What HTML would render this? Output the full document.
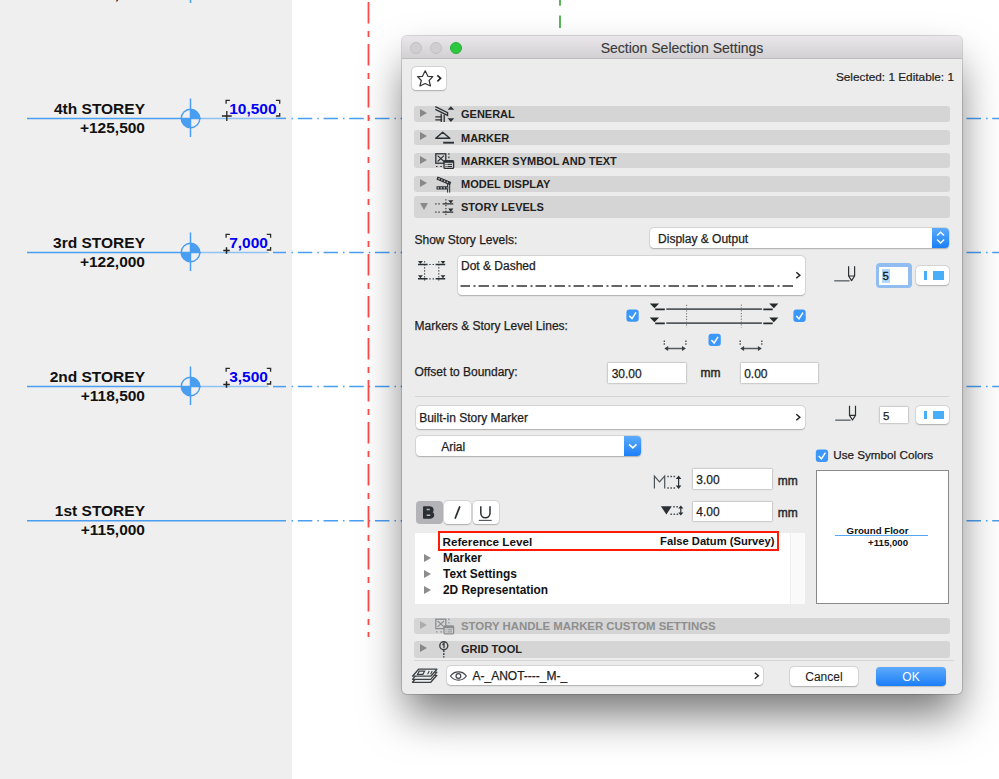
<!DOCTYPE html>
<html><head><meta charset="utf-8">
<style>
*{margin:0;padding:0;box-sizing:border-box}
html,body{width:999px;height:779px;overflow:hidden;background:#fff;font-family:"Liberation Sans",sans-serif;color:#222}
.a{position:absolute}
.t{position:absolute;white-space:nowrap;line-height:1}
#left{left:0;top:0;width:292px;height:779px;background:#efefef}
.lbl{font-weight:bold;font-size:15.5px;color:#111;text-align:right;width:200px}
.val{font-weight:bold;font-size:15.5px;color:#0000f5}
#dlg{left:402px;top:36px;width:560px;height:658px;background:#ececec;border-radius:5px;
 box-shadow:0 0 0 1px rgba(0,0,0,.15),0 24px 44px -4px rgba(0,0,0,.55)}
#title{left:0;top:0;width:560px;height:23px;border-radius:5px 5px 0 0;background:linear-gradient(#e9e7e9,#d2d0d2);border-bottom:1px solid #bdbdbd}
.tl{position:absolute;top:5.5px;width:12px;height:12px;border-radius:50%;background:#d0cfd0;border:0.5px solid #c2c1c2}
.bar{position:absolute;left:12px;width:536px;height:15.5px;background:#d5d5d5;border-radius:3px}
.bt{position:absolute;left:47px;top:3px;font-size:11px;font-weight:bold;color:#222;white-space:nowrap;line-height:1}
.tri{position:absolute;left:6px;top:2.9px;width:0;height:0;border-top:4.7px solid transparent;border-bottom:4.7px solid transparent;border-left:7.8px solid #888}
.f{position:absolute;background:#fff;border:1px solid #cdcdcd;border-radius:1.5px;box-shadow:0 0 0 0.6px #e2e2e2}
.ft{position:absolute;font-size:12px;color:#1d1d1d;white-space:nowrap;line-height:1;-webkit-text-stroke:0.25px}
.pop{position:absolute;background:#fff;border-radius:4px;box-shadow:0 0 0 0.5px rgba(0,0,0,.12),0 0.5px 1.5px rgba(0,0,0,.22)}
.cb{position:absolute;width:12px;height:12px;border-radius:3px;background:#3b99fc}
</style></head><body>
<div id="left" class="a"></div>
<div class="t lbl" style="left:-55px;top:-14.5px">+129,000</div>
<svg class="a" style="left:170px;top:-36px" width="40" height="40"><line x1="20.5" y1="0.5" x2="20.5" y2="39" stroke="#4a9ef2" stroke-width="1.5"/></svg>

<svg class="a" style="left:0;top:0" width="999" height="779">
 <g stroke="#4a9ef2" stroke-width="1.5" fill="none">
  <line x1="27" y1="118.4" x2="201.5" y2="118.4"/><line x1="276" y1="118.4" x2="286" y2="118.4"/><line x1="201.5" y1="118.4" x2="276" y2="118.4" stroke="#8ec2f2"/>
  <line x1="27" y1="252.5" x2="201.5" y2="252.5"/><line x1="273" y1="252.5" x2="286" y2="252.5"/><line x1="201.5" y1="252.5" x2="268.5" y2="252.5" stroke="#8ec2f2"/>
  <line x1="27" y1="386.6" x2="201.5" y2="386.6"/><line x1="273" y1="386.6" x2="286" y2="386.6"/><line x1="201.5" y1="386.6" x2="268.5" y2="386.6" stroke="#8ec2f2"/>
  <line x1="27" y1="520.8" x2="286" y2="520.8"/>
 </g>
 <g stroke="#4a9ef2" stroke-width="1.5" fill="none" stroke-dasharray="14.5 5 1.5 4.72" stroke-dashoffset="-10.8">
  <line x1="287" y1="118.4" x2="999" y2="118.4"/>
  <line x1="287" y1="252.5" x2="999" y2="252.5"/>
  <line x1="287" y1="386.6" x2="999" y2="386.6"/>
  <line x1="287" y1="520.8" x2="999" y2="520.8"/>
 </g>
 <line x1="368.5" y1="0" x2="368.5" y2="637" stroke="#fd4a4a" stroke-width="1.8" stroke-dasharray="21.6 7.4 6 7" stroke-dashoffset="40"/>
 <line x1="560" y1="0" x2="560" y2="28" stroke="#5ab55a" stroke-width="2" stroke-dasharray="5.7 9.9 12.3 100" stroke-dashoffset="0"/>
 <g id="mk">
 </g>
</svg>
<div class="t lbl" style="left:-55px;top:100.5px">4th STOREY</div>
<div class="t lbl" style="left:-55px;top:119.5px">+125,500</div>
<svg class="a" style="left:170px;top:98px" width="40" height="40">
 <line x1="20.5" y1="0.5" x2="20.5" y2="39" stroke="#4a9ef2" stroke-width="1.5"/>
 <circle cx="20.5" cy="20.5" r="9.3" fill="none" stroke="#4a9ef2" stroke-width="1.4"/>
 <path d="M20.5 20.5 L20.5 11.2 A9.3 9.3 0 0 1 29.8 20.5 Z M20.5 20.5 L20.5 29.8 A9.3 9.3 0 0 1 11.2 20.5 Z" fill="#4a9ef2"/>
</svg>
<div class="t val" style="left:229.2px;top:101px">10,500</div>
<div class="t lbl" style="left:-55px;top:234.5px">3rd STOREY</div>
<div class="t lbl" style="left:-55px;top:253.5px">+122,000</div>
<svg class="a" style="left:170px;top:232px" width="40" height="40">
 <line x1="20.5" y1="0.5" x2="20.5" y2="39" stroke="#4a9ef2" stroke-width="1.5"/>
 <circle cx="20.5" cy="20.5" r="9.3" fill="none" stroke="#4a9ef2" stroke-width="1.4"/>
 <path d="M20.5 20.5 L20.5 11.2 A9.3 9.3 0 0 1 29.8 20.5 Z M20.5 20.5 L20.5 29.8 A9.3 9.3 0 0 1 11.2 20.5 Z" fill="#4a9ef2"/>
</svg>
<div class="t val" style="left:229.2px;top:235px">7,000</div>
<div class="t lbl" style="left:-55px;top:368.5px">2nd STOREY</div>
<div class="t lbl" style="left:-55px;top:387.5px">+118,500</div>
<svg class="a" style="left:170px;top:366px" width="40" height="40">
 <line x1="20.5" y1="0.5" x2="20.5" y2="39" stroke="#4a9ef2" stroke-width="1.5"/>
 <circle cx="20.5" cy="20.5" r="9.3" fill="none" stroke="#4a9ef2" stroke-width="1.4"/>
 <path d="M20.5 20.5 L20.5 11.2 A9.3 9.3 0 0 1 29.8 20.5 Z M20.5 20.5 L20.5 29.8 A9.3 9.3 0 0 1 11.2 20.5 Z" fill="#4a9ef2"/>
</svg>
<div class="t val" style="left:229.2px;top:369px">3,500</div>
<div class="t lbl" style="left:-55px;top:502.5px">1st STOREY</div>
<div class="t lbl" style="left:-55px;top:521.5px">+115,000</div>

<svg class="a" style="left:0;top:0" width="999" height="779"><path d="M226.1 103.8 V100.3 H229.9 M275.9 100.3 H279.7 V103.8 M279.7 113 V116 H275.9" stroke="#2a2a2a" stroke-width="1.3" fill="none"/><path d="M221.9 116 H231.7 M226.8 111.1 V120.9" stroke="#222" stroke-width="1.3"/><path d="M226.1 237.8 V234.3 H229.9 M266.8 234.3 H270.6 V237.8 M270.6 247 V250 H266.8" stroke="#2a2a2a" stroke-width="1.3" fill="none"/><path d="M223.3 250.5 H229.8 M226.5 247.3 V253.8" stroke="#222" stroke-width="1.5"/><path d="M226.1 371.8 V368.3 H229.9 M266.8 368.3 H270.6 V371.8 M270.6 381 V384 H266.8" stroke="#2a2a2a" stroke-width="1.3" fill="none"/><path d="M223.3 384.5 H229.8 M226.5 381.3 V387.8" stroke="#222" stroke-width="1.5"/></svg>
<div id="dlg" class="a">
 <div id="title" class="a">
  <div class="tl" style="left:8px"></div>
  <div class="tl" style="left:28px"></div>
  <div class="tl" style="left:48px;background:#2ec840;border-color:#25b033"></div>
  <div class="t" style="left:0;width:560px;text-align:center;top:5px;font-size:14px;color:#3a3a3a;-webkit-text-stroke:0.15px">Section Selection Settings</div>
 </div>
 <!-- star button -->
 <div class="pop" style="left:10px;top:31px;width:34px;height:23px"></div>
 <div class="t" style="right:8px;top:36px;font-size:11.8px;color:#1d1d1d;-webkit-text-stroke:0.2px">Selected: 1 Editable: 1</div>

 <div class="bar" style="top:70.4px"><div class="tri"></div><div class="bt">GENERAL</div></div>
 <div class="bar" style="top:93.6px"><div class="tri"></div><div class="bt">MARKER</div></div>
 <div class="bar" style="top:116.9px"><div class="tri"></div><div class="bt">MARKER SYMBOL AND TEXT</div></div>
 <div class="bar" style="top:140.4px"><div class="tri"></div><div class="bt">MODEL DISPLAY</div></div>
 <div class="bar" style="top:160.4px;height:21.3px"><div class="tri" style="top:6.8px;left:5.7px;border-left:4.3px solid transparent;border-right:4.3px solid transparent;border-top:7.3px solid #8a8a8a;border-bottom:0"></div><div class="bt" style="top:6px">STORY LEVELS</div></div>

 <div class="ft" style="left:12.5px;top:197.5px">Show Story Levels:</div>
 <div class="pop" style="left:247.6px;top:192px;width:299px;height:20px;overflow:hidden">
   <div class="ft" style="left:8.5px;top:4.5px">Display &amp; Output</div>
   <div class="a" style="right:0;top:0;width:16.5px;height:20px;background:linear-gradient(#5aabfc,#1b7ff6)"></div>
 </div>
 <div class="pop" style="left:56px;top:219.6px;width:347.3px;height:39px"><div class="ft" style="left:3px;top:4.8px">Dot &amp; Dashed</div></div>

 <div class="ft" style="left:12.5px;top:283.5px">Markers &amp; Story Level Lines:</div>
 <div class="ft" style="left:12.5px;top:330px">Offset to Boundary:</div>
 <div class="f" style="left:205px;top:326.2px;width:79.8px;height:21.8px"><div class="ft" style="left:3.7px;top:4.6px">30.00</div></div>
 <div class="ft" style="left:298.6px;top:331px;font-weight:normal;font-size:12px;-webkit-text-stroke:0.45px;color:#2a2a2a">mm</div>
 <div class="f" style="left:338px;top:326.2px;width:79.2px;height:21.8px"><div class="ft" style="left:3.2px;top:4.6px">0.00</div></div>
 <div class="a" style="left:13px;top:360px;width:534px;height:1px;background:#d4d4d4"></div>

 <div class="pop" style="left:13.7px;top:369.5px;width:389.3px;height:23.3px"><div class="ft" style="left:3.5px;top:6.6px">Built-in Story Marker</div></div>
 <div class="pop" style="left:13.7px;top:400.3px;width:225.3px;height:20px;overflow:hidden">
   <div class="ft" style="left:25.5px;top:5px">Arial</div>
   <div class="a" style="right:0;top:0;width:16.5px;height:20px;background:linear-gradient(#5aabfc,#1b7ff6)"></div>
 </div>

 <div class="ft" style="left:431.2px;top:413px;font-size:11.7px">Use Symbol Colors</div>
 <div class="a" style="left:414px;top:434.4px;width:133px;height:133.6px;background:#fff;border:1.5px solid #8a8a8a"></div>

 <div class="f" style="left:290.3px;top:432px;width:80.5px;height:21.7px"><div class="ft" style="left:3px;top:4.8px">3.00</div></div>
 <div class="ft" style="left:375.8px;top:439px;font-weight:normal;font-size:12px;-webkit-text-stroke:0.45px;color:#2a2a2a">mm</div>
 <div class="f" style="left:290.3px;top:465px;width:80.5px;height:21.2px"><div class="ft" style="left:3px;top:4.2px">4.00</div></div>
 <div class="ft" style="left:375.8px;top:471px;font-weight:normal;font-size:12px;-webkit-text-stroke:0.45px;color:#2a2a2a">mm</div>

 <div class="a" style="left:13.6px;top:465.2px;width:27px;height:22.6px;background:#b4b4b8;border-radius:4px"></div>
 <div class="pop" style="left:42.1px;top:465.2px;width:26.8px;height:22.6px"></div>
 <div class="pop" style="left:70.5px;top:465.2px;width:26.4px;height:22.6px"></div>

 <div class="a" style="left:13px;top:497.4px;width:375px;height:70.6px;background:#fff"></div>
 <div class="a" style="left:388px;top:497.4px;width:15px;height:70.6px;background:#fafafa;border-left:1px solid #efefef"></div>

 <div class="bar" style="top:582.4px"><div class="tri" style="border-left-color:#acacac"></div><div class="bt" style="color:#8e8e8e;font-size:11.4px">STORY HANDLE MARKER CUSTOM SETTINGS</div></div>
 <div class="bar" style="top:605.1px;height:16.6px"><div class="tri"></div><div class="bt">GRID TOOL</div></div>
 <div class="a" style="left:12px;top:624.2px;width:539.6px;height:1px;background:#d6d6d6"></div>

 <div class="pop" style="left:45px;top:629.8px;width:316px;height:19.5px"><div class="ft" style="left:25.5px;top:4.5px">A-_ANOT----_M-_</div></div>
 <div class="pop" style="left:387.5px;top:630.7px;width:68.8px;height:19.6px"><div class="ft" style="left:0;width:68.8px;text-align:center;top:4.5px;font-size:12px;-webkit-text-stroke:0.1px">Cancel</div></div>
 <div class="a" style="left:474.1px;top:630.5px;width:69.8px;height:19.8px;border-radius:4px;background:linear-gradient(#5fabfb,#1a7ef6);box-shadow:0 0.5px 1px rgba(0,0,0,.2)"><div class="ft" style="left:0;width:69.8px;text-align:center;top:4.5px;font-size:12px;color:#fff;-webkit-text-stroke:0">OK</div></div>

 <!-- pen field focused -->
 <div class="a" style="left:473.5px;top:226.9px;width:36.4px;height:25.3px;border-radius:4px;background:#92bdf0"></div>
 <div class="a" style="left:477.2px;top:230.5px;width:29.1px;height:18.1px;background:#fff"></div>
 <div class="a" style="left:480.3px;top:233px;width:7.7px;height:14.1px;background:#b5d6fd"></div>
 <div class="ft" style="left:480.5px;top:234.5px;font-size:11.5px;color:#111;-webkit-text-stroke:0.3px #111">5</div>
 <div class="pop" style="left:514.4px;top:230.1px;width:32.3px;height:19px"><div class="a" style="left:7.6px;top:4.7px;width:3px;height:9.5px;background:#48aef8"></div><div class="a" style="left:16.6px;top:4.7px;width:11px;height:9.5px;background:#48aef8"></div></div>
 <!-- pen field 2 -->
 <div class="f" style="left:477px;top:370.4px;width:29.6px;height:17.9px"><div class="ft" style="left:3px;top:3.5px;font-size:11.5px">5</div></div>
 <div class="pop" style="left:514.3px;top:370px;width:32.3px;height:18px"><div class="a" style="left:7.7px;top:4.7px;width:3px;height:8.6px;background:#48aef8"></div><div class="a" style="left:16.7px;top:4.7px;width:11px;height:8.6px;background:#48aef8"></div></div>
 <!-- tree list -->
 <div class="a" style="left:36px;top:495px;width:341px;height:20px;border:2px solid #ff1a0a"></div>
 <div class="t" style="left:40.5px;top:499.6px;font-size:11.7px;font-weight:bold;color:#111">Reference Level</div>
 <div class="t" style="right:187.5px;top:499.9px;font-size:11.2px;font-weight:bold;color:#111">False Datum (Survey)</div>
 <div class="t" style="left:41px;top:516.9px;font-size:11.9px;font-weight:bold;color:#111">Marker</div>
 <div class="t" style="left:41px;top:533px;font-size:11.9px;font-weight:bold;color:#111">Text Settings</div>
 <div class="t" style="left:41px;top:548.8px;font-size:11.9px;font-weight:bold;color:#111">2D Representation</div>
 <div class="tri" style="left:22px;top:517.6px;border-left-color:#8c8c8c"></div>
 <div class="tri" style="left:22px;top:533.6px;border-left-color:#8c8c8c"></div>
 <div class="tri" style="left:22px;top:549.6px;border-left-color:#8c8c8c"></div>
 <!-- preview -->
 <div class="t" style="left:444.6px;top:489.5px;font-size:9.7px;font-weight:bold;color:#111">Ground Floor</div>
 <div class="a" style="left:432.7px;top:498.8px;width:93px;height:1.2px;background:#56a6f2"></div>
 <div class="t" style="left:466px;top:501.5px;font-size:9.7px;font-weight:bold;color:#111">+115,000</div>
</div>

<svg class="a" style="left:0;top:0" width="999" height="779"><path d="M425.2 70.8 L427.9 76.3 L432.8 76.6 L429.1 80.5 L430.5 86 L425.2 83.5 L419.9 86 L421.3 80.5 L417.6 76.6 L422.5 76.3 Z" fill="none" stroke="#333" stroke-width="1.2" stroke-linejoin="round"/>
<path d="M437.4 75.3 L440.6 78.3 L437.4 81.3" fill="none" stroke="#222" stroke-width="1.6"/>
<g stroke="#2b3034" stroke-width="1.3" fill="none"><path d="M435.3 106.6 L447.6 112.7 L447.6 115.4 L435.3 109.4"/><path d="M435.3 116.8 H442.2 M435.3 119.9 H442.2 M441.2 113.8 V122 M444.2 114.8 V122"/></g>
<path d="M447.6 109.8 L454.2 109.8 L450.9 106.2 Z M447.6 118.3 L454.2 118.3 L450.9 122 Z" fill="#2b3034"/>
<path d="M435.8 138.3 L442.7 132.3 L449.8 138.3 Z" fill="none" stroke="#2b3034" stroke-width="1.5" stroke-linejoin="round"/><path d="M443.2 142.7 H454" stroke="#2b3034" stroke-width="1.9"/>
<g stroke="#2b3034" fill="none" stroke-width="1.3"><rect x="435.8" y="153.8" width="10" height="9.4"/><path d="M437.6 155.6 L444 161.5 M444 155.6 L437.6 161.5" stroke-width="1.1"/></g>
<rect x="444" y="160.6" width="9.6" height="7.8" fill="#d5d5d5" stroke="#2b3034" stroke-width="1.3" rx="1"/><rect x="444" y="160.6" width="9.6" height="2.2" fill="#2b3034"/>
<path d="M447.5 164.4 H452 M447.5 166.5 H452 M445.5 164.4 H446.5 M445.5 166.5 H446.5" stroke="#2b3034" stroke-width="1"/>
<path d="M448.9 153.2 V154.8 M448.9 156.6 V158.2 M436 166.5 H437.5 M440.3 166.5 H441.8" stroke="#2b3034" stroke-width="1.2"/>
<path d="M437 178 L450.6 183.6 M436.5 187.9 H448.2" stroke="#2b3034" stroke-width="3.3"/><path d="M447.6 184 V192.6 M449.7 184 V192.6" stroke="#2b3034" stroke-width="1"/>
<path d="M438.4 178.6 L449.6 183.2 M437.6 187.9 H447.6" stroke="#d5d5d5" stroke-width="1.1" stroke-dasharray="1.4 1.6"/>
<path d="M435.3 203.8 H441.5 M435.3 212.1 H441.5" stroke="#2b3034" stroke-width="1.2" stroke-dasharray="1.3 1.8"/>
<path d="M442.5 203.8 H453.3 M442.5 212.1 H453.3" stroke="#2b3034" stroke-width="1.3"/>
<path d="M445.9 199.2 V215.5" stroke="#2b3034" stroke-width="1.1" stroke-dasharray="1.3 1.6"/>
<path d="M448.2 200.3 H453.4 L450.8 203.6 Z M448.2 208.6 H453.4 L450.8 211.9 Z" fill="#2b3034"/>
<g stroke="#8a8d90" fill="none" stroke-width="1.3"><rect x="435.8" y="619.2" width="10" height="9.4"/><path d="M437.6 621 L444 626.9 M444 621 L437.6 626.9" stroke-width="1.1"/></g>
<rect x="444" y="626.0" width="9.6" height="7.8" fill="#d5d5d5" stroke="#8a8d90" stroke-width="1.3" rx="1"/><rect x="444" y="626.0" width="9.6" height="2.2" fill="#8a8d90"/>
<path d="M447.5 629.8 H452 M447.5 631.9 H452 M445.5 629.8 H446.5 M445.5 631.9 H446.5" stroke="#8a8d90" stroke-width="1"/>
<path d="M448.9 618.5999999999999 V620.2 M448.9 622.0 V623.5999999999999 M436 631.9 H437.5 M440.3 631.9 H441.8" stroke="#8a8d90" stroke-width="1.2"/>
<circle cx="443.8" cy="645.7" r="4" fill="none" stroke="#3a3f43" stroke-width="1.4"/><path d="M442.5 645 L444 643.3 V648.2" fill="none" stroke="#3a3f43" stroke-width="1.3"/><path d="M443.8 650.3 V657.5" stroke="#3a3f43" stroke-width="1.5" stroke-dasharray="1.6 1.4"/>
<path d="M418 264.5 H427.6 M435.6 264.5 H445.2 M418 278.8 H427.6 M435.6 278.8 H445.2" stroke="#2b3034" stroke-width="1.4"/>
<path d="M429.3 264.5 H434 M429.3 278.8 H434" stroke="#2b3034" stroke-width="1.2" stroke-dasharray="1.3 2"/>
<path d="M424.6 261.3 V282 M438.8 261.3 V282" stroke="#2b3034" stroke-width="1.1" stroke-dasharray="1.3 1.7"/>
<path d="M418 261 H422.9 L420.4 264 Z M440.6 261 H445.4 L443 264 Z M418 275.3 H422.9 L420.4 278.3 Z M440.6 275.3 H445.4 L443 278.3 Z" fill="#2b3034"/>
<path d="M460.5 286 H793" stroke="#333" stroke-width="1.5" stroke-dasharray="10.5 3.5 2 3" stroke-dashoffset="1"/>
<path d="M796.3 272.3 L799.8 275.3 L796.3 278.3" fill="none" stroke="#222" stroke-width="1.5"/>
<path d="M796.3 414.3 L799.8 417.3 L796.3 420.3" fill="none" stroke="#222" stroke-width="1.5"/>
<path d="M754.8 672.8 L758.3 675.8 L754.8 678.8" fill="none" stroke="#222" stroke-width="1.5"/>
<path d="M834.2 280.8 H849.6" stroke="#6c7276" stroke-width="1.5"/><path d="M848.6 266.3 V276 L851.6 280.6 L854.6 276 V266.3 M848.6 276 H854.6" fill="none" stroke="#2b3034" stroke-width="1.2" stroke-linejoin="round"/>
<path d="M835.2 420.2 H850.6" stroke="#6c7276" stroke-width="1.5"/><path d="M849.5 405.7 V415.4 L852.5 420 L855.5 415.4 V405.7 M849.5 415.4 H855.5" fill="none" stroke="#2b3034" stroke-width="1.2" stroke-linejoin="round"/>
<path d="M937.1 235.5 L940.6 232.2 L944.1 235.5 M937.1 239.5 L940.6 243 L944.1 239.5" fill="none" stroke="#fff" stroke-width="1.3"/>
<path d="M629.1 444.4 L632.8 447.9 L636.5 444.4" fill="none" stroke="#fff" stroke-width="1.6"/>
<rect x="626.4" y="309.4" width="12.3" height="12.3" rx="3" fill="#3b98fa"/><path d="M629.3 315.7 L632.0 318.59999999999997 L636.0 312.4" fill="none" stroke="#fff" stroke-width="1.5"/>
<rect x="793.4" y="309.6" width="12.3" height="12.3" rx="3" fill="#3b98fa"/><path d="M796.3 315.90000000000003 L799.0 318.8 L803.0 312.6" fill="none" stroke="#fff" stroke-width="1.5"/>
<rect x="708.5" y="333.8" width="12.3" height="12.3" rx="3" fill="#3b98fa"/><path d="M711.4 340.1 L714.1 343.0 L718.1 336.8" fill="none" stroke="#fff" stroke-width="1.5"/>
<rect x="815.8" y="449.6" width="12.3" height="12.3" rx="3" fill="#3b98fa"/><path d="M818.6999999999999 455.90000000000003 L821.4 458.8 L825.4 452.6" fill="none" stroke="#fff" stroke-width="1.5"/>
<path d="M649.8 303.6 H659.1 L654.5 308.2 Z M769.2 303.6 H778.4 L773.8 308.2 Z M649.8 317.6 H659.1 L654.5 322.2 Z M769.2 317.6 H778.4 L773.8 322.2 Z" fill="#24292c"/>
<path d="M655.2 309.4 H664.8 M763.3 309.4 H772.7 M655.2 323.4 H664.8 M763.3 323.4 H772.7" stroke="#24292c" stroke-width="1.8"/>
<path d="M666.3 309.2 H761.9 M666.3 323.2 H761.9" stroke="#555a5e" stroke-width="1.8"/>
<path d="M686.6 304.8 V327.4 M741.3 304.6 V327.5" stroke="#6a6e72" stroke-width="1" stroke-dasharray="1.2 1.6"/>
<path d="M664.3 340.5 V346 M685.9 340.5 V346 M740.2 340.5 V346 M761.8 340.5 V346" stroke="#444" stroke-width="1.3" stroke-dasharray="1.5 1.3"/>
<path d="M666 348.5 H684.3 M742 348.5 H760.2" stroke="#555a5e" stroke-width="1.5"/>
<path d="M668.2 345.9 L664.3 348.5 L668.2 351.1 Z M682 345.9 L685.9 348.5 L682 351.1 Z M744.1 345.9 L740.2 348.5 L744.1 351.1 Z M757.9 345.9 L761.8 348.5 L757.9 351.1 Z" fill="#3a3f43"/>
<path d="M654.4 488.6 V476 L659.5 481.8 L664.7 476 V488.6" fill="none" stroke="#4d5357" stroke-width="1.2"/>
<path d="M667.3 476.5 H675.5 M667.3 488 H675.5" fill="none" stroke="#4d5357" stroke-width="1.5" stroke-dasharray="1.6 1.5"/>
<path d="M678.6 477 V487.5" stroke="#2b3034" stroke-width="1.2"/><path d="M675.8 478.9 L678.6 475.6 L681.4 478.9 Z M675.8 485.6 L678.6 488.9 L681.4 485.6 Z" fill="#2b3034"/>
<path d="M660.9 506.3 H671.8 L666.4 514.6 Z" fill="#2b3034"/>
<path d="M673.2 506.8 H678.2 M670.4 514.2 H678.2" fill="none" stroke="#4d5357" stroke-width="1.5" stroke-dasharray="1.6 1.5"/>
<path d="M680.8 507 V514" stroke="#2b3034" stroke-width="1.2"/><path d="M678.2 508.6 L680.8 505.6 L683.4 508.6 Z M678.2 512.4 L680.8 515.4 L683.4 512.4 Z" fill="#2b3034"/>
<path d="M423.8 507 H429.5 C433.5 507 433.8 511.8 430.6 512.3 C434.5 512.6 434.5 518 429.7 518 H423.8 Z" fill="#2b3034" stroke="#2b3034" stroke-width="1.6" stroke-linejoin="round"/>
<path d="M426.6 509.6 H429.8 M426.6 515.2 H430.3" stroke="#b5b5ba" stroke-width="1.5"/>
<path d="M459.6 507 L455.3 518" stroke="#2b3034" stroke-width="1.8" stroke-linecap="round"/>
<path d="M480.8 506.3 V513.3 C480.8 519.2 490 519.2 490 513.3 V506.3" fill="none" stroke="#2b3034" stroke-width="1.5"/>
<path d="M478.8 520.4 H491.7" stroke="#4d5357" stroke-width="1.1"/>
<g fill="#ececec" stroke="#3d4347" stroke-width="1.3" stroke-linejoin="round">
<path d="M418.6 675.3 H436.9 L430.8 682.3 H412.5 Z"/>
<path d="M418.6 672.2 H436.9 L430.8 679.3 H412.5 Z"/>
<path d="M418.6 669.2 H436.9 L430.8 676.2 H412.5 Z"/>
</g>
<path d="M419.2 671.2 H424.6 L422.9 674.4 H417.5 Z" fill="none" stroke="#3d4347" stroke-width="1.2"/>
<path d="M427.6 674.3 L429.2 671 M430.6 674.3 L432.2 671" stroke="#3d4347" stroke-width="1.1"/>
<path d="M450.5 676 C454.5 670.5 462.5 670.5 466.3 676 C462.5 681.5 454.5 681.5 450.5 676 Z" fill="none" stroke="#3d4347" stroke-width="1.2"/><circle cx="458.4" cy="676" r="2.4" fill="none" stroke="#3d4347" stroke-width="1.2"/></svg>
</body></html>
